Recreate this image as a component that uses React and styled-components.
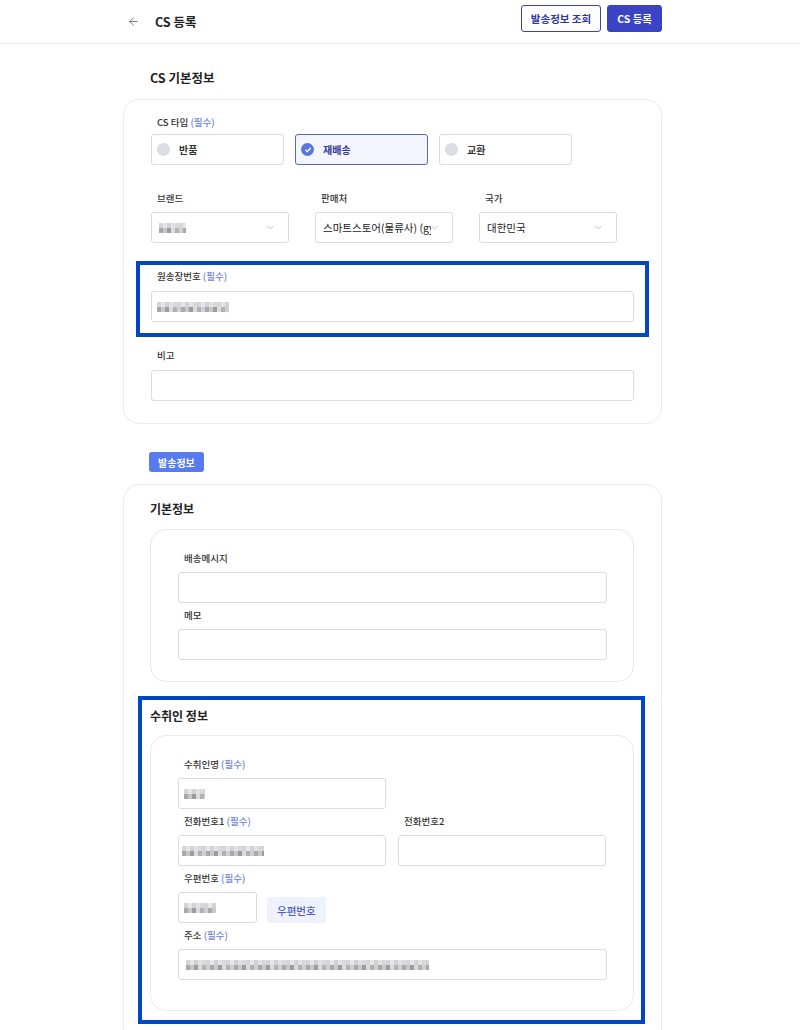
import React from "react"
import styled, { createGlobalStyle } from "styled-components"
import { ArrowLeft, ChevronDown } from "lucide-react"

const GlobalStyle = createGlobalStyle`
  body {
    margin: 0;
    background: #fff;
    font-family: "Noto Sans CJK KR", "Noto Sans", sans-serif;
    color: #222;
  }
  * { box-sizing: border-box; }
`

const Header = styled.header`
  height: 44px;
  border-bottom: 1px solid #ebebeb;
`
const HeaderInner = styled.div`
  width: 539px;
  margin-left: 123px;
  height: 100%;
  display: flex;
  align-items: center;
  justify-content: space-between;
  padding-left: 4px;
`
const TitleWrap = styled.div`
  display: flex;
  align-items: center;
  gap: 15px;
  color: #555;
`
const PageTitle = styled.h1`
  margin: 0;
  font-size: 12.5px;
  font-weight: 700;
  color: #222;
`
const Actions = styled.div`
  display: flex;
  gap: 6px;
  margin-top: -6px;
`
const HeadButton = styled.button`
  height: 27px;
  padding: 0 9px;
  border-radius: 3px;
  font-family: inherit;
  font-size: 10.5px;
  font-weight: 700;
  border: 1px solid #3a42b8;
  background: ${(p) => (p.primary ? "#3a44c4" : "#fff")};
  color: ${(p) => (p.primary ? "#fff" : "#2f37a8")};
`

const Column = styled.main`
  width: 539px;
  margin-left: 123px;
  padding: 24px 0 20px;
`
const SectionTitle = styled.h2`
  margin: 0 0 11px 27px;
  font-size: 12.5px;
  line-height: 20px;
  font-weight: 700;
  color: #222;
`
const Card = styled.section`
  border: 1px solid #ebebeb;
  border-radius: 16px;
  padding: ${(p) => p.pad};
  display: flex;
  flex-direction: column;
  gap: ${(p) => p.gap || 0}px;
`
const Field = styled.div`
  display: flex;
  flex-direction: column;
  width: ${(p) => (p.w ? `${p.w}px` : "auto")};
`
const Label = styled.label`
  font-size: 9.5px;
  line-height: 14px;
  font-weight: 500;
  color: #333;
  padding-left: 6px;
  margin-bottom: ${(p) => p.mb || 7}px;
`
const Req = styled.span`
  color: #6a7fe0;
`
const Input = styled.div`
  height: 31px;
  width: ${(p) => (p.w ? `${p.w}px` : "auto")};
  border: 1px solid #dcdcdc;
  border-radius: 3px;
  background: #fff;
  display: flex;
  align-items: center;
  padding-left: ${(p) => p.pl || 5}px;
  overflow: hidden;
`
const Mosaic = styled.span`
  display: inline-block;
  width: ${(p) => p.w}px;
  height: 10px;
  background:
    repeating-linear-gradient(
      90deg,
      #d6d4d5 0 4px,
      #e6e6e8 4px 8px,
      #cfd2d6 8px 12px,
      #e4e1df 12px 16px,
      #d9d9dc 16px 20px
    ) top / 100% 5px no-repeat,
    repeating-linear-gradient(
      90deg,
      #a8a8ad 0 4px,
      #c9c7c8 4px 8px,
      #9b9ca2 8px 12px,
      #dedcdb 12px 16px,
      #b2b0b4 16px 20px,
      #cdd1d6 20px 24px
    ) bottom / 100% 5px no-repeat;
`
const RadioRow = styled.div`
  display: flex;
  gap: 11px;
`
const RadioBox = styled.div`
  width: 133px;
  height: 31px;
  border-radius: 3px;
  border: 1px solid ${(p) => (p.active ? "#4e68cc" : "#dcdcdc")};
  background: ${(p) => (p.active ? "#f3f6fe" : "#fff")};
  display: flex;
  align-items: center;
  gap: 9px;
  padding-left: 5px;
  font-size: 10px;
  font-weight: 700;
  color: ${(p) => (p.active ? "#33349e" : "#333")};
`
const Dot = styled.span`
  width: 13px;
  height: 13px;
  border-radius: 50%;
  background: ${(p) => (p.active ? "#5a76dc" : "#dcdde2")};
  display: flex;
  align-items: center;
  justify-content: center;
`
const SelectRow = styled.div`
  display: flex;
  gap: 26px;
`
const Select = styled.div`
  height: 31px;
  border: 1px solid #dcdcdc;
  border-radius: 3px;
  display: flex;
  align-items: center;
  justify-content: space-between;
  padding: 0 12px 0 7px;
  font-size: 10.5px;
  color: #222;
  white-space: nowrap;
  overflow: hidden;
  svg {
    flex-shrink: 0;
    margin-left: -2px;
  }
`
const SelectText = styled.span`
  overflow: hidden;
`
const Highlight = styled.div`
  border: 4px solid #0047c8;
  margin: ${(p) => p.m};
  padding: ${(p) => p.pad};
`
const Badge = styled.span`
  width: fit-content;
  margin: 28px 0 12px 26px;
  height: 20px;
  padding: 0 9px;
  border-radius: 3px;
  background: #587cf0;
  color: #fff;
  font-size: 10px;
  font-weight: 700;
  display: flex;
  align-items: center;
`
const SubTitle = styled.h3`
  margin: 0 0 ${(p) => p.mb}px;
  font-size: 12px;
  line-height: 20px;
  font-weight: 700;
  color: #222;
`
const TwoCol = styled.div`
  display: grid;
  grid-template-columns: 208px 208px;
  column-gap: 12px;
`
const ZipRow = styled.div`
  display: flex;
  align-items: flex-end;
  gap: 10px;
`
const ZipButton = styled.button`
  height: 26px;
  padding: 0 10px;
  border: none;
  border-radius: 3px;
  background: #eef2fd;
  color: #4d5cbf;
  font-family: inherit;
  font-size: 10.5px;
  font-weight: 500;
`

const Check = () => (
  <svg width="8" height="8" viewBox="0 0 10 10">
    <path d="M2 5.2l2 2 4-4.4" fill="none" stroke="#fff" strokeWidth="1.6" strokeLinecap="round" strokeLinejoin="round" />
  </svg>
)

const Chevron = () => <ChevronDown size={11} strokeWidth={1.3} color="#9a9a9a" />

function App() {
  const types = ["반품", "재배송", "교환"]
  return (
    <>
      <GlobalStyle />
      <Header>
        <HeaderInner>
          <TitleWrap>
            <ArrowLeft size={13} strokeWidth={1.4} />
            <PageTitle>CS 등록</PageTitle>
          </TitleWrap>
          <Actions>
            <HeadButton>발송정보 조회</HeadButton>
            <HeadButton primary>CS 등록</HeadButton>
          </Actions>
        </HeaderInner>
      </Header>

      <Column>
        <SectionTitle>CS 기본정보</SectionTitle>
        <Card pad="15px 27px 22px 27px" gap={26}>
          <Field>
            <Label mb={5}>
              CS 타입 <Req>(필수)</Req>
            </Label>
            <RadioRow>
              {types.map((t) => (
                <RadioBox key={t} active={t === "재배송"}>
                  <Dot active={t === "재배송"}>{t === "재배송" && <Check />}</Dot>
                  {t}
                </RadioBox>
              ))}
            </RadioRow>
          </Field>

          <SelectRow>
            <Field w={138}>
              <Label>브랜드</Label>
              <Select>
                <Mosaic w={27} />
                <Chevron />
              </Select>
            </Field>
            <Field w={138}>
              <Label>판매처</Label>
              <Select>
                <SelectText>스마트스토어(물류사) (gy</SelectText>
                <Chevron />
              </Select>
            </Field>
            <Field w={138}>
              <Label>국가</Label>
              <Select>
                <SelectText>대한민국</SelectText>
                <Chevron />
              </Select>
            </Field>
          </SelectRow>

          <Highlight m="-8px -15px -15px" pad="4px 11px 11px">
            <Field>
              <Label mb={8}>
                원송장번호 <Req>(필수)</Req>
              </Label>
              <Input>
                <Mosaic w={72} />
              </Input>
            </Field>
          </Highlight>

          <Field>
            <Label mb={8}>비고</Label>
            <Input />
          </Field>
        </Card>

        <Badge>발송정보</Badge>

        <Card pad="14px 27px 40px 26px">
          <SubTitle mb={10}>기본정보</SubTitle>
          <Card pad="21px 26px 21px 27px" gap={5}>
            <Field>
              <Label>배송메시지</Label>
              <Input />
            </Field>
            <Field>
              <Label>메모</Label>
              <Input />
            </Field>
          </Card>

          <Highlight m="14px -11px 0 -12px" pad="6px 7px 9px 8px">
            <SubTitle mb={9}>수취인 정보</SubTitle>
            <Card pad="21px 26px 30px 27px" gap={5}>
              <Field w={208}>
                <Label>
                  수취인명 <Req>(필수)</Req>
                </Label>
                <Input>
                  <Mosaic w={21} />
                </Input>
              </Field>
              <TwoCol>
                <Field>
                  <Label>
                    전화번호1 <Req>(필수)</Req>
                  </Label>
                  <Input pl={3}>
                    <Mosaic w={82} />
                  </Input>
                </Field>
                <Field>
                  <Label>전화번호2</Label>
                  <Input />
                </Field>
              </TwoCol>
              <Field>
                <Label>
                  우편번호 <Req>(필수)</Req>
                </Label>
                <ZipRow>
                  <Input w={79}>
                    <Mosaic w={32} />
                  </Input>
                  <ZipButton>우편번호</ZipButton>
                </ZipRow>
              </Field>
              <Field>
                <Label>
                  주소 <Req>(필수)</Req>
                </Label>
                <Input pl={7}>
                  <Mosaic w={243} />
                </Input>
              </Field>
            </Card>
          </Highlight>
        </Card>
      </Column>
    </>
  )
}

export default App
